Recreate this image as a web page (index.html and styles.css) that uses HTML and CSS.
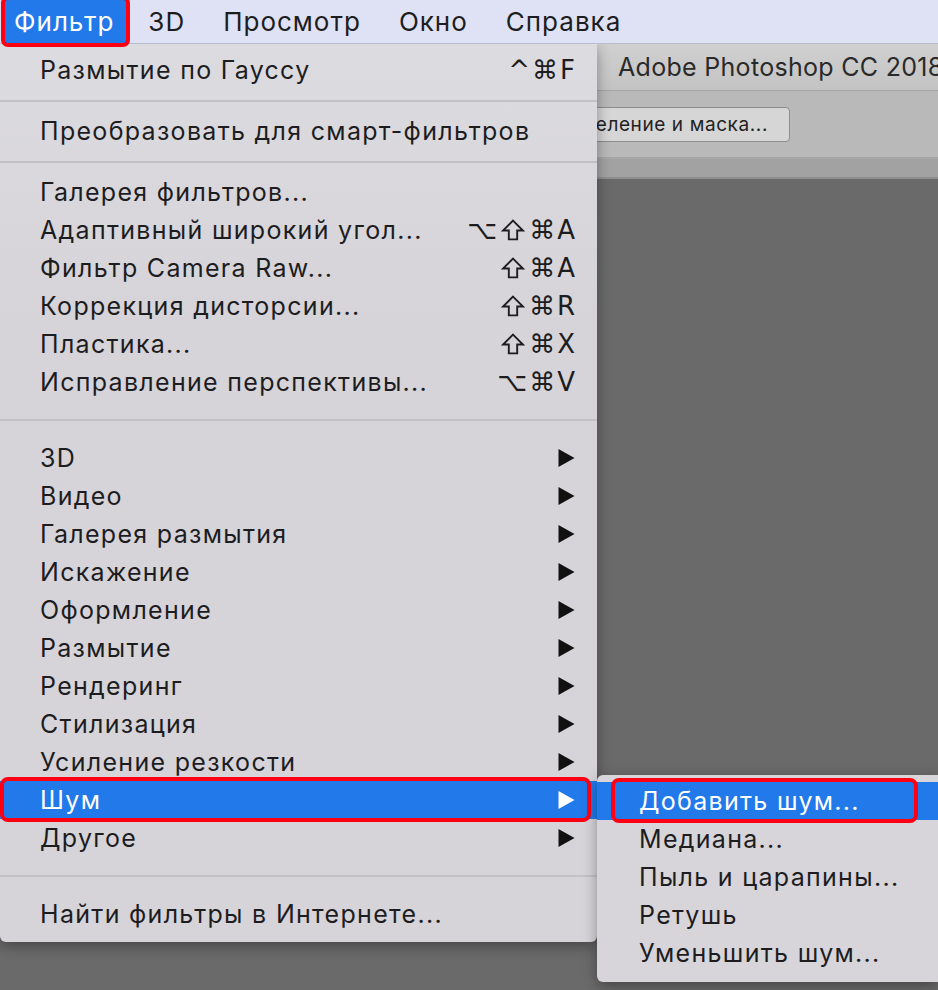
FILE: index.html
```html
<!DOCTYPE html>
<html lang="ru">
<head>
    <meta charset="UTF-8">
    <title>Фильтр — Шум</title>
    <link rel="stylesheet" href="styles.css">
</head>
<body>
    <div class="menubar">
        <div class="menubar-item active">Фильтр</div>
        <div class="menubar-item">3D</div>
        <div class="menubar-item">Просмотр</div>
        <div class="menubar-item">Окно</div>
        <div class="menubar-item">Справка</div>
    </div>

    <div class="workspace">
        <div class="titlebar">Adobe Photoshop CC 2018</div>
        <div class="optionsbar">
            <div class="opt-button">Выделение и маска...</div>
        </div>
        <div class="tabsbar"></div>
        <div class="canvas"></div>
    </div>

    <div class="dropdown">
        <div class="item"><span>Размытие по Гауссу</span><span class="keys">^⌘F</span></div>
        <div class="sep"></div>
        <div class="item"><span>Преобразовать для смарт-фильтров</span></div>
        <div class="sep"></div>
        <div class="item"><span>Галерея фильтров...</span></div>
        <div class="item"><span>Адаптивный широкий угол...</span><span class="keys">⌥<svg class="shift" viewBox="0 0 22 21"><polygon points="11,1.5 20.5,11 15,11 15,19.5 7,19.5 7,11 1.5,11"/></svg>⌘A</span></div>
        <div class="item"><span>Фильтр Camera Raw...</span><span class="keys"><svg class="shift" viewBox="0 0 22 21"><polygon points="11,1.5 20.5,11 15,11 15,19.5 7,19.5 7,11 1.5,11"/></svg>⌘A</span></div>
        <div class="item"><span>Коррекция дисторсии...</span><span class="keys"><svg class="shift" viewBox="0 0 22 21"><polygon points="11,1.5 20.5,11 15,11 15,19.5 7,19.5 7,11 1.5,11"/></svg>⌘R</span></div>
        <div class="item"><span>Пластика...</span><span class="keys"><svg class="shift" viewBox="0 0 22 21"><polygon points="11,1.5 20.5,11 15,11 15,19.5 7,19.5 7,11 1.5,11"/></svg>⌘X</span></div>
        <div class="item"><span>Исправление перспективы...</span><span class="keys">⌥⌘V</span></div>
        <div class="sep big"></div>
        <div class="item"><span>3D</span><svg class="arrow" viewBox="0 0 16 18"><polygon points="0,0 16,9 0,18"/></svg></div>
        <div class="item"><span>Видео</span><svg class="arrow" viewBox="0 0 16 18"><polygon points="0,0 16,9 0,18"/></svg></div>
        <div class="item"><span>Галерея размытия</span><svg class="arrow" viewBox="0 0 16 18"><polygon points="0,0 16,9 0,18"/></svg></div>
        <div class="item"><span>Искажение</span><svg class="arrow" viewBox="0 0 16 18"><polygon points="0,0 16,9 0,18"/></svg></div>
        <div class="item"><span>Оформление</span><svg class="arrow" viewBox="0 0 16 18"><polygon points="0,0 16,9 0,18"/></svg></div>
        <div class="item"><span>Размытие</span><svg class="arrow" viewBox="0 0 16 18"><polygon points="0,0 16,9 0,18"/></svg></div>
        <div class="item"><span>Рендеринг</span><svg class="arrow" viewBox="0 0 16 18"><polygon points="0,0 16,9 0,18"/></svg></div>
        <div class="item"><span>Стилизация</span><svg class="arrow" viewBox="0 0 16 18"><polygon points="0,0 16,9 0,18"/></svg></div>
        <div class="item"><span>Усиление резкости</span><svg class="arrow" viewBox="0 0 16 18"><polygon points="0,0 16,9 0,18"/></svg></div>
        <div class="item selected"><span>Шум</span><svg class="arrow" viewBox="0 0 16 18"><polygon points="0,0 16,9 0,18"/></svg><div class="mark"></div></div>
        <div class="item"><span>Другое</span><svg class="arrow" viewBox="0 0 16 18"><polygon points="0,0 16,9 0,18"/></svg></div>
        <div class="sep big"></div>
        <div class="item"><span>Найти фильтры в Интернете...</span></div>
    </div>

    <div class="submenu">
        <div class="item selected"><span>Добавить шум...</span><div class="mark"></div></div>
        <div class="item"><span>Медиана...</span></div>
        <div class="item"><span>Пыль и царапины...</span></div>
        <div class="item"><span>Ретушь</span></div>
        <div class="item"><span>Уменьшить шум...</span></div>
    </div>
</body>
</html>
```

FILE: styles.css
```css
body {
    margin: 0;
    width: 938px;
    height: 990px;
    overflow: hidden;
    position: relative;
    background-color: #6a6a6a;
    font-family: Inter, "Noto Sans", sans-serif;
    color: #1d1d1f;
}

.menubar {
    position: relative;
    z-index: 2;
    display: flex;
    height: 44px;
    padding-left: 4px;
    background-color: #dee2f4;
    border-bottom: 1px solid #b9bccb;
    box-sizing: border-box;
}

.menubar-item {
    position: relative;
    padding: 0 19px;
    font-size: 26px;
    letter-spacing: 1px;
    line-height: 44px;
    white-space: nowrap;
}

.menubar-item.active {
    padding: 0 12px 0 10px;
    margin-right: 3px;
    background-color: #2179ea;
    color: #fff;
}

.menubar-item.active::after {
    content: "";
    position: absolute;
    left: -3px;
    top: -4px;
    right: -4px;
    bottom: -4px;
    border: 4px solid #ff0013;
    border-radius: 7px;
}

.workspace {
    display: flex;
    flex-direction: column;
}

.titlebar {
    height: 46px;
    padding-left: 618px;
    font-size: 25px;
    letter-spacing: 0.3px;
    line-height: 46px;
    white-space: nowrap;
    color: #2a2a2a;
    background: linear-gradient(to bottom, #d0d0d0, #c3c3c3);
    border-bottom: 1px solid #a5a5a5;
}

.optionsbar {
    height: 66px;
    display: flex;
    align-items: center;
    padding-left: 500px;
    background-color: #b9b9b9;
    border-bottom: 2px solid #a6a6a6;
}

.opt-button {
    height: 35px;
    width: 290px;
    box-sizing: border-box;
    padding-right: 21px;
    text-align: right;
    font-size: 19px;
    letter-spacing: 0.6px;
    line-height: 33px;
    color: #222;
    background-color: #d6d6d6;
    border: 1px solid #8c8c8c;
    border-radius: 4px;
    white-space: nowrap;
}

.tabsbar {
    height: 18px;
    background-color: #a2a2a2;
    border-bottom: 2px solid #8f8f8f;
}

.canvas {
    flex: 1;
}

.dropdown, .submenu {
    position: absolute;
    background-color: #d7d5da;
    box-shadow: 0 4px 14px rgba(0, 0, 0, 0.35);
}

.dropdown {
    left: 0;
    top: 44px;
    width: 597px;
    padding: 7px 0 9px;
    border-radius: 0 0 6px 6px;
    background: linear-gradient(to bottom, #dcdbe0, #d6d4d9 30%, #d6d4d9);
}

.submenu {
    left: 597px;
    top: 775px;
    width: 341px;
    padding: 7px 0 10px;
    border-radius: 6px 0 0 6px;
}

.item {
    position: relative;
    display: flex;
    align-items: center;
    justify-content: space-between;
    height: 38px;
    padding: 0 22px 0 40px;
    font-size: 25px;
    letter-spacing: 1.3px;
    white-space: nowrap;
}

.submenu .item {
    padding-left: 42px;
}

.keys {
    display: flex;
    align-items: center;
    font-family: "DejaVu Sans", sans-serif;
    font-size: 26px;
    letter-spacing: 2px;
    margin-right: -2px;
}

.shift {
    width: 24px;
    height: 22px;
    margin: 0 4px 0 2px;
    fill: none;
    stroke: #1d1d1f;
    stroke-width: 1.8;
    stroke-linejoin: miter;
}

.arrow {
    width: 17px;
    height: 18px;
    fill: #111;
}

.sep {
    height: 23px;
    display: flex;
    align-items: center;
}

.sep::before {
    content: "";
    flex: 1;
    height: 2px;
    background-color: #c3c1c7;
}

.sep.big {
    height: 38px;
}

.item.selected {
    background-color: #2179ea;
    color: #fff;
}

.item.selected .arrow {
    fill: #fff;
}

.mark {
    position: absolute;
    top: -4px;
    bottom: -3px;
    left: 0;
    right: 6px;
    border: 4px solid #ff0013;
    border-radius: 8px;
}

.submenu .mark {
    left: 14px;
    right: 20px;
}
```
